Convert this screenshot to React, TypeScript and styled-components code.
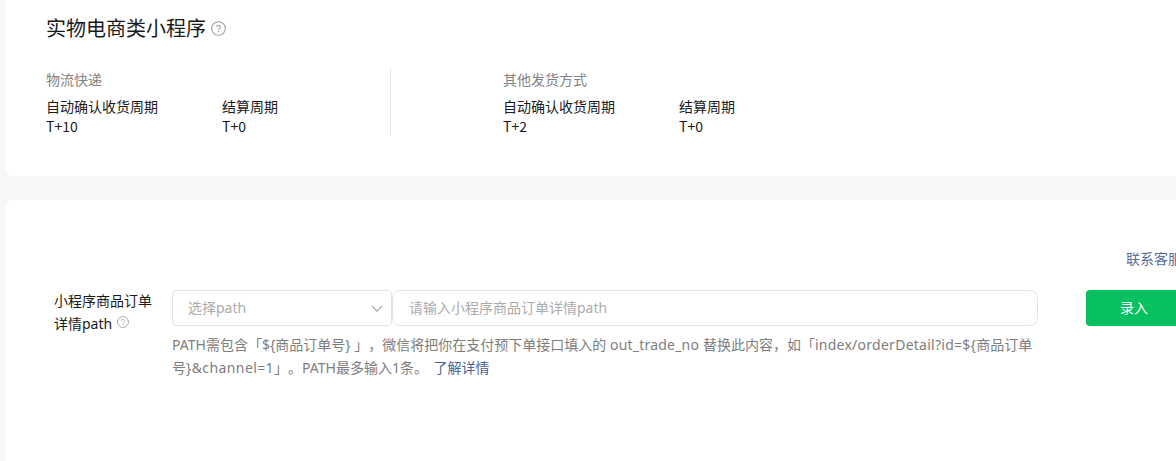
import { FC } from 'react';
import styled, { createGlobalStyle } from 'styled-components';

interface Period {
  label: string;
  value: string;
}

interface DeliveryGroup {
  title: string;
  periods: Period[];
}

const deliveryGroups: DeliveryGroup[] = [
  {
    title: '物流快递',
    periods: [
      { label: '自动确认收货周期', value: 'T+10' },
      { label: '结算周期', value: 'T+0' },
    ],
  },
  {
    title: '其他发货方式',
    periods: [
      { label: '自动确认收货周期', value: 'T+2' },
      { label: '结算周期', value: 'T+0' },
    ],
  },
];

const HelpIcon: FC<{ size: number }> = ({ size }) => (
  <HelpSvg width={size} height={size} viewBox="0 0 16 16">
    <circle cx="8" cy="8" r="7.3" />
    <path d="M6 6.4c0-1.2.9-1.9 2-1.9s2 .7 2 1.8c0 1.5-2 1.5-2 3.1" />
    <path d="M8 10.6v1.2" />
  </HelpSvg>
);

const App: FC = () => {
  return (
    <>
      <GlobalStyle />
      <Page>
        <SettlementCard>
          <Heading>
            实物电商类小程序
            <HelpIcon size={15} />
          </Heading>
          <Groups>
            {deliveryGroups.map((group) => (
              <Group key={group.title}>
                <GroupTitle>{group.title}</GroupTitle>
                <Periods>
                  {group.periods.map((period) => (
                    <PeriodItem key={period.label}>
                      <div>{period.label}</div>
                      <div>{period.value}</div>
                    </PeriodItem>
                  ))}
                </Periods>
              </Group>
            ))}
          </Groups>
        </SettlementCard>
        <PathCard>
          <SupportLink>联系客服</SupportLink>
          <FormRow>
            <FieldLabel>
              <div>小程序商品订单</div>
              <LabelLine>
                详情path
                <HelpIcon size={12} />
              </LabelLine>
            </FieldLabel>
            <Field>
              <Controls>
                <Select type="button">
                  选择path
                  <Chevron width="12" height="8" viewBox="0 0 12 8">
                    <path d="M1 1l5 5.2L11 1" />
                  </Chevron>
                </Select>
                <PathInput placeholder="请输入小程序商品订单详情path" />
              </Controls>
              <Hint>
                <HintLine>
                  PATH需包含「$&#123;商品订单号&#125; 」，微信将把你在支付预下单接口填入的
                  <Code $spacing={0.2}> out_trade_no </Code>
                  替换此内容，如「
                  <Code $spacing={0.26}>index/orderDetail?id=$&#123;</Code>
                  商品订单
                </HintLine>
                <HintLine>
                  号<Code $spacing={0.4}>&#125;&amp;channel=1</Code>
                  」。PATH最多输入1条。 <DetailLink>了解详情</DetailLink>
                </HintLine>
              </Hint>
            </Field>
            <SubmitButton type="button">录入</SubmitButton>
          </FormRow>
        </PathCard>
      </Page>
    </>
  );
};

const GlobalStyle = createGlobalStyle`
  * {
    box-sizing: border-box;
  }

  body {
    margin: 0;
    overflow: hidden;
    background: #f6f7f9;
    color: #1a1a1a;
    font-family: 'Noto Sans', 'Noto Sans CJK SC', sans-serif;
    font-size: 14px;
    text-spacing-trim: space-all;
  }
`;

const Page = styled.div`
  display: flex;
  flex-direction: column;
  gap: 24px;
  height: 461px;
  padding-left: 6px;
  overflow: hidden;
`;

const SettlementCard = styled.section`
  flex: none;
  height: 176px;
  padding: 13px 40px 0;
  border-radius: 0 0 0 6px;
  background: #fff;
  font-family: 'Noto Sans CJK SC', sans-serif;
`;

const Heading = styled.h2`
  display: flex;
  align-items: center;
  gap: 5px;
  margin: 0;
  font-size: 20px;
  font-weight: 400;
  line-height: 30px;

  svg {
    margin-top: 1px;
  }
`;

const HelpSvg = styled.svg`
  flex: none;
  fill: none;
  stroke: #9a9a9a;
  stroke-width: 1.1;
`;

const Groups = styled.div`
  display: flex;
  gap: 112px;
  margin-top: 25px;
`;

const Group = styled.div`
  width: 345px;
  height: 68px;

  & + & {
    width: 344px;
  }

  &:first-child {
    border-right: 1px solid #e4e4e6;
  }
`;

const GroupTitle = styled.div`
  color: #838383;
  line-height: 22px;
`;

const Periods = styled.div`
  display: flex;
  margin-top: 6px;
`;

const PeriodItem = styled.div`
  flex: none;
  width: 176px;
  line-height: 20px;

  & + & {
    width: 120px;
  }
`;

const PathCard = styled.section`
  flex: 1;
  width: 1210px;
  padding: 48px 28px 0 48px;
  border-radius: 6px 0 0 0;
  background: #fff;
`;

const SupportLink = styled.a`
  display: block;
  padding-left: 1072px;
  color: #576b95;
  line-height: 22px;
  white-space: nowrap;
`;

const FormRow = styled.div`
  display: flex;
  align-items: flex-start;
  margin-top: 20px;
`;

const FieldLabel = styled.div`
  width: 118px;
  margin-top: -1px;
  line-height: 23px;
`;

const LabelLine = styled.div`
  display: flex;
  align-items: center;
  gap: 5px;

  svg {
    margin-bottom: 3px;
  }
`;

const Field = styled.div`
  width: 866px;
`;

const Controls = styled.div`
  display: flex;
`;

const Select = styled.button`
  display: flex;
  align-items: center;
  justify-content: space-between;
  width: 220px;
  height: 36px;
  padding: 0 8px 2px 15px;
  border: 1px solid #e2e2e4;
  border-radius: 4px;
  background: #fff;
  color: #acacac;
  font: inherit;
`;

const Chevron = styled.svg`
  margin-top: 3px;
  fill: none;
  stroke: #a6a6a6;
  stroke-width: 1.1;
`;

const PathInput = styled.input`
  width: 646px;
  height: 36px;
  padding: 0 16px 2px;
  border: 1px solid #e2e2e4;
  border-radius: 8px;
  outline: none;
  font: inherit;

  &::placeholder {
    color: #acacac;
  }
`;

const Hint = styled.div`
  margin-top: 7px;
  color: #7e7e7e;
  line-height: 23px;
`;

const HintLine = styled.div`
  white-space: nowrap;
`;

const Code = styled.span<{ $spacing: number }>`
  letter-spacing: ${({ $spacing }) => $spacing}px;
`;

const DetailLink = styled.a`
  margin-left: 2px;
  color: #4d6396;
`;

const SubmitButton = styled.button`
  width: 96px;
  height: 36px;
  margin-left: 48px;
  padding: 0 0 2px;
  border: 0;
  border-radius: 4px;
  background: #07c160;
  color: #fff;
  font: inherit;
`;

export default App;
